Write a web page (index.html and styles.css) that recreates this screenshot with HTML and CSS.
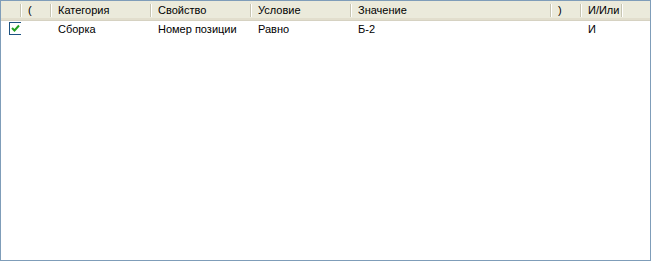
FILE: index.html
```
<!DOCTYPE html>
<html lang="ru">
<head>
  <meta charset="UTF-8">
  <title>Условия</title>
  <link rel="stylesheet" href="styles.css">
</head>
<body>
  <div class="list">
    <div class="row head">
      <div class="cell"></div>
      <div class="cell">(</div>
      <div class="cell">Категория</div>
      <div class="cell">Свойство</div>
      <div class="cell">Условие</div>
      <div class="cell">Значение</div>
      <div class="cell">)</div>
      <div class="cell">И/Или</div>
      <div class="cell fill"></div>
    </div>
    <div class="row item">
      <div class="cell"><span class="check"><svg width="9" height="9" viewBox="0 0 9 9"><path d="M1 4 L3.5 6.5 L8 1.5" fill="none" stroke="#21a121" stroke-width="2"/></svg></span></div>
      <div class="cell"></div>
      <div class="cell">Сборка</div>
      <div class="cell">Номер позиции</div>
      <div class="cell">Равно</div>
      <div class="cell">Б-2</div>
      <div class="cell"></div>
      <div class="cell">И</div>
      <div class="cell fill"></div>
    </div>
  </div>
</body>
</html>
```
FILE: styles.css
```
* {
  box-sizing: border-box;
  margin: 0;
  padding: 0;
}

body {
  font-family: 'Liberation Sans', Arial, sans-serif;
  font-size: 11px;
  color: #000;
  background: #fff;
}

.list {
  width: 651px;
  height: 261px;
  border: 1px solid #7f9db9;
  background: #fff;
}

.row {
  display: grid;
  grid-template-columns: 20px 30px 100px 100px 100px 200px 30px 41px 1fr;
}

.head {
  height: 20px;
  background: #ebeadb;
  border-bottom: 1px solid #d6d2c2;
  box-shadow: inset 0 -2px 0 #e2decd;
}

/* разделители колонок: тёмная линия справа, светлая слева у следующей */
.head .cell {
  line-height: 18px;
  padding-left: 7px;
  background:
    linear-gradient(#c7c5b2, #c7c5b2) right 0 top 3px / 1px 13px no-repeat,
    linear-gradient(#fff, #fff) left 0 top 3px / 1px 13px no-repeat;
}

.head .cell:first-child {
  background:
    linear-gradient(#c7c5b2, #c7c5b2) right 0 top 3px / 1px 13px no-repeat;
}

.head .fill {
  background:
    linear-gradient(#fff, #fff) left 0 top 3px / 1px 13px no-repeat;
}

.item {
  height: 17px;
}

.item .cell {
  line-height: 17px;
  padding-left: 7px;
  white-space: nowrap;
  overflow: hidden;
}

.item .cell:first-child {
  padding-left: 8px;
}

.check {
  display: inline-flex;
  align-items: center;
  justify-content: center;
  width: 13px;
  height: 13px;
  margin-top: 1px;
  border: 1px solid #1c5180;
  background: #fff;
  vertical-align: top;
}
```
